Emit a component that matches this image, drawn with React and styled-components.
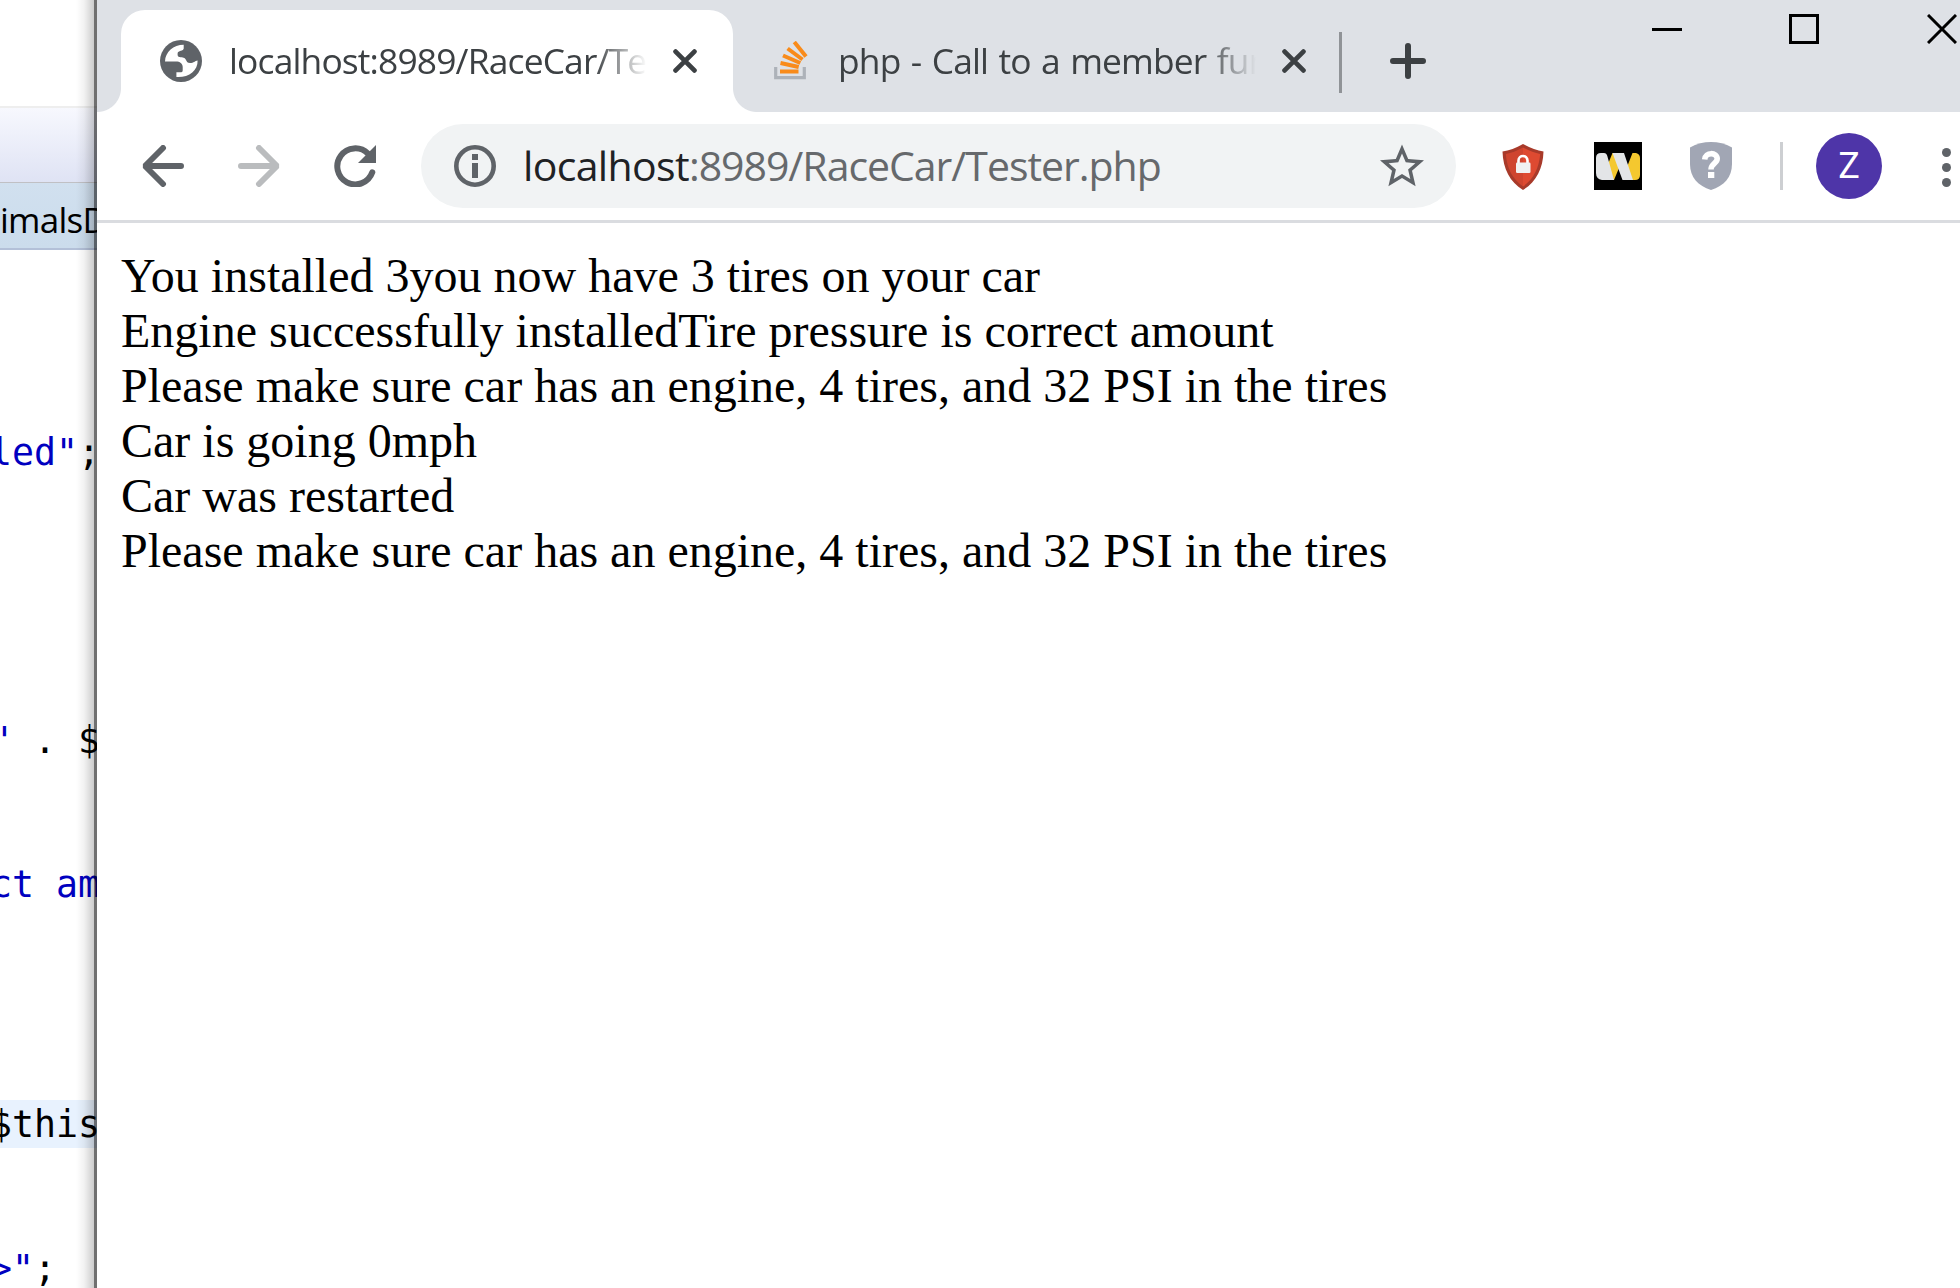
import React from "react";
import styled, { createGlobalStyle } from "styled-components";

const GlobalStyle = createGlobalStyle`
  html, body { margin: 0; padding: 0; background: #fff; }
  body { overflow: hidden; }
  * { box-sizing: border-box; }
  svg { display: block; flex: none; }
`;

const uiFont = `"Open Sans", "Noto Sans", sans-serif`;

const Desktop = styled.main`
  display: grid;
  grid-template-columns: 97px 1863px;
  width: 1960px;
  height: 1288px;
  overflow: hidden;
`;

/* ---------- editor behind the browser ---------- */

const Editor = styled.aside`
  position: relative;
  display: flex;
  flex-direction: column;
  overflow: hidden;
  padding-top: 106px;
  background: #fff;
  &::after {
    content: "";
    position: absolute;
    inset: 0;
    border-right: 3px solid rgba(0, 0, 0, 0.56);
    background: linear-gradient(to right, rgba(0, 0, 0, 0) 76px, rgba(0, 0, 0, 0.05) 84px, rgba(0, 0, 0, 0.2) 94px);
    background-clip: padding-box;
  }
`;

const EditorToolbar = styled.div`
  flex: none;
  height: 76px;
  border-top: 2px solid #eeeeee;
  background: linear-gradient(#f7f8fe, #dfe3f4);
`;

const EditorTab = styled.div`
  flex: none;
  height: 68px;
  border-top: 1px solid #c0c0c4;
  border-bottom: 2px solid #b3c0d8;
  background: linear-gradient(#d1e0ef, #cbdcec);
  font: 35px/74px ${uiFont};
  letter-spacing: -0.75px;
  white-space: nowrap;
  color: #000;
`;

const CodeArea = styled.div`
  flex: none;
  padding-top: 34px;
`;

const CodeLine = styled.div`
  height: 48px;
  text-indent: -10px;
  white-space: pre;
  font: 36.54px/50px "DejaVu Sans Mono", monospace;
  color: #000;
  background: ${(p) => (p.$current ? "#e8f2fe" : "transparent")};
`;

const StringLiteral = styled.span`
  color: #0000c0;
`;

/* ---------- browser window ---------- */

const Browser = styled.section`
  display: flex;
  flex-direction: column;
  background: #fff;
`;

const TabStrip = styled.div`
  display: flex;
  height: 112px;
  padding: 10px 0 0 24px;
  background: #dee1e6;
`;

const Tab = styled.div`
  position: relative;
  display: flex;
  align-items: center;
  flex: none;
  width: ${(p) => p.$width}px;
  height: 102px;
  padding-left: ${(p) => p.$pad}px;
  border-radius: 24px 24px 0 0;
  background: ${(p) => (p.$active ? "#fff" : "transparent")};
  &::before, &::after {
    content: "";
    display: ${(p) => (p.$active ? "block" : "none")};
    position: absolute;
    bottom: 0;
    width: 24px;
    height: 24px;
  }
  &::before {
    left: -24px;
    background: radial-gradient(circle at 0 0, transparent 23.5px, #fff 24.5px);
  }
  &::after {
    right: -24px;
    background: radial-gradient(circle at 100% 0, transparent 23.5px, #fff 24.5px);
  }
`;

const TabTitle = styled.div`
  flex: none;
  width: 418px;
  margin-left: ${(p) => p.$gap}px;
  margin-right: 26px;
  padding-bottom: 2px;
  overflow: hidden;
  white-space: nowrap;
  font: 35.4px/60px ${uiFont};
  letter-spacing: -0.85px;
  word-spacing: 2px;
  color: #3c4043;
  mask-image: linear-gradient(to right, #000 365px, transparent 418px);
`;

const TabDivider = styled.div`
  flex: none;
  width: 3px;
  height: 61px;
  margin: 22px 48px 0 33px;
  background: #909397;
`;

const NewTab = styled.div`
  padding-top: 33px;
`;

const WindowControls = styled.div`
  display: flex;
  gap: 107px;
  margin: 4px 0 0 226px;
  & > :last-child { margin-left: 1px; }
`;

const Toolbar = styled.div`
  display: flex;
  align-items: center;
  flex: none;
  height: 111px;
  padding: 0 0 0 45px;
  border-bottom: 3px solid #dadce0;
`;

const NavButtons = styled.div`
  display: flex;
  gap: 54px;
  margin-right: 45px;
`;

const AddressBar = styled.div`
  display: flex;
  align-items: center;
  flex: none;
  width: 1035px;
  height: 84px;
  padding: 0 32px 0 33px;
  border-radius: 42px;
  background: #f1f3f4;
`;

const Url = styled.div`
  flex: 1;
  margin-left: 27px;
  white-space: nowrap;
  font: 41px/82px ${uiFont};
  padding-bottom: 2px;
  letter-spacing: -1.02px;
  color: #66696c;
`;

const Host = styled.span`
  letter-spacing: -0.65px;
  color: #202124;
`;

const Extensions = styled.div`
  display: flex;
  align-items: center;
  gap: 48px;
  margin-left: 46px;
  & > :first-child { margin-right: 2px; }
`;

const ToolbarDivider = styled.div`
  width: 3px;
  height: 48px;
  background: #cdcfd2;
`;

const Avatar = styled.div`
  flex: none;
  width: 66px;
  height: 66px;
  margin: 0 60px 0 -15px;
  border-radius: 50%;
  background: #4e35a8;
  color: #fff;
  font: 36px/67px Roboto, sans-serif;
  text-align: center;
`;

const MenuDots = styled.div`
  display: grid;
  gap: 6px;
  margin: 3px 0 0 -48px;
  & > i {
    width: 9px;
    height: 9px;
    border-radius: 50%;
    background: #5f6368;
  }
`;

const Page = styled.article`
  padding: 25px 24px;
  font: 48px/55px "Liberation Serif", "Times New Roman", serif;
  color: #000;
  white-space: nowrap;
`;

/* ---------- drawings ---------- */

const Globe = () => (
  <svg width="42" height="42" viewBox="0 0 42 42">
    <circle cx="21" cy="21" r="21" fill="#5f6368" />
    <path fill="#fff" d="M5 21.5C5.2 12 13.5 4.7 23.7 4.7V8.6C23.7 11.3 17.8 10.4 17.6 13.4C17.4 16.6 18.5 17 21.8 17.3C27.5 17.8 25 23 30 23C34 23 34.7 20.6 37.6 20.4C38 30.6 28.5 37.8 16.4 37V32.2H21.2C22.6 32.2 22.7 31.5 22.7 29.5V27C22.7 23.5 19.8 21.5 16 21.5Z" />
  </svg>
);

const StackOverflow = () => (
  <svg width="34" height="40" viewBox="0 0 34 40">
    <path d="M1.700 26V36.700H30.300V26" fill="none" stroke="#adb2b9" strokeWidth="3.2" />
    <g stroke="#f98b1a" strokeWidth="4">
      <path d="M6 30.500H24.500" />
      <path d="M6.500 22L24.700 26" />
      <path d="M9 14.500L26.300 22" />
      <path d="M13.600 7.500L28.500 18.500" />
      <path d="M20.300 1L32 15.500" />
    </g>
  </svg>
);

const Cross = () => (
  <svg width="24" height="24" viewBox="0 0 24 24">
    <path d="M2.600 2.600L21.400 21.400M21.400 2.600L2.600 21.400" stroke="#3c4043" strokeWidth="4.800" strokeLinecap="round" />
  </svg>
);

const Plus = () => (
  <svg width="36" height="36" viewBox="0 0 36 36">
    <path d="M18 3V33M3 18H33" stroke="#3c4043" strokeWidth="6" strokeLinecap="round" />
  </svg>
);

const WindowIcon = ({ d }) => (
  <svg width="30" height="30" viewBox="0 0 30 30">
    <path d={d} fill="none" stroke="#000" strokeWidth="3" />
  </svg>
);

const Arrow = ({ forward }) => (
  <svg width="42" height="42" viewBox="0 0 42 42">
    <path
      d={forward ? "M3 21H37M21 3L39 21L21 39" : "M39 21H5M21 3L3 21L21 39"}
      fill="none"
      stroke={forward ? "#babcbe" : "#5f6368"}
      strokeWidth="6"
      strokeLinecap="round"
      strokeLinejoin="bevel"
    />
  </svg>
);

const Reload = () => (
  <svg width="42" height="42" viewBox="0 0 42 42">
    <path d="M34 8.600A18 18 0 1 0 38.300 27.300" fill="none" stroke="#5f6368" strokeWidth="6" strokeLinecap="round" />
    <path d="M42 0V18H24Z" fill="#5f6368" />
  </svg>
);

const Info = () => (
  <svg width="42" height="42" viewBox="0 0 42 42">
    <circle cx="21" cy="21" r="18.700" fill="none" stroke="#5f6368" strokeWidth="4.600" />
    <path d="M18 9H24V15H18ZM18 18H24V33H18Z" fill="#5f6368" />
  </svg>
);

const Star = () => (
  <svg width="44" height="44" viewBox="2 1.800 20 20">
    <path fill="#5f6368" d="M22 9.240l-7.190-.62L12 2 9.190 8.630 2 9.240l5.460 4.730L5.820 21 12 17.270 18.180 21l-1.630-7.030L22 9.240zM12 15.400l-3.760 2.270 1-4.280-3.320-2.880 4.380-.38L12 6.100l1.710 4.040 4.380.38-3.320 2.880 1 4.280L12 15.400z" />
  </svg>
);

const RedShield = () => (
  <svg width="42" height="48" viewBox="0 0 42 48">
    <path fill="#a83a2a" d="M21 2C14 6 7 8.500 0.500 9.500C1 27 8 40 21 48C34 40 41 27 41.500 9.500C35 8.500 28 6 21 2Z" />
    <path fill="#cf452f" d="M21 5.500C15 9 9 11 3.800 12C5 26.500 10.500 37 21 44.500Z" />
    <path fill="#de4a31" d="M21 5.500C27 9 33 11 38.200 12C37 26.500 31.500 37 21 44.500Z" />
    <path d="M16.500 22V18.500C16.500 12.500 25.500 12.500 25.500 18.500V22" fill="none" stroke="#fff" strokeWidth="2.600" />
    <rect x="14" y="20.500" width="14.500" height="10.500" rx="1.200" fill="#f1f1f1" />
  </svg>
);

const WBadge = () => (
  <svg width="48" height="48" viewBox="0 0 48 48">
    <rect width="48" height="48" fill="#000" />
    <path fill="#f4c82f" d="M18.500 11H23L25 26L20 38H18L14 22ZM38.500 11H42Q46 12 46 16V33Q46 38 41 38H38L33 25Z" />
    <path fill="#e3e5e7" d="M2 16Q2 11 7 11H10Q12.500 11 13.300 14L20 38H8Q2 37 2 31ZM18.500 11H30L39 38H28.500Z" />
  </svg>
);

const GreyShield = () => (
  <svg width="42" height="48" viewBox="0 0 42 48">
    <path fill="#a1a6b4" d="M0 5.500C13 -1.800 29 -1.800 42 5.500V22C42 35 34 44 21 48C8 44 0 35 0 22Z" />
    <path d="M14.700 17.500C15.200 9.700 27.200 10 27.200 16.800C27.200 21.500 21 21.500 21 27.500" fill="none" stroke="#fff" strokeWidth="5.600" />
    <rect x="18" y="30" width="6.300" height="6" fill="#fff" />
  </svg>
);

const codeLines = {
  3: [["led\"", true], [";"]],
  9: [["\"", true], [" . $"]],
  12: [["ct am", true]],
  17: [["$this"]],
  20: [[">\"", true], [";"]],
};

const output = [
  "You installed 3you now have 3 tires on your car",
  "Engine successfully installedTire pressure is correct amount",
  "Please make sure car has an engine, 4 tires, and 32 PSI in the tires",
  "Car is going 0mph",
  "Car was restarted",
  "Please make sure car has an engine, 4 tires, and 32 PSI in the tires",
];

export default function App() {
  return (
    <Desktop>
      <GlobalStyle />
      <Editor>
        <EditorToolbar />
        <EditorTab>imalsD</EditorTab>
        <CodeArea>
          {Array.from({ length: 21 }, (_, row) => (
            <CodeLine key={row} $current={row === 17}>
              {(codeLines[row] || []).map(([text, literal]) =>
                literal ? <StringLiteral key={text}>{text}</StringLiteral> : text
              )}
            </CodeLine>
          ))}
        </CodeArea>
      </Editor>
      <Browser>
        <TabStrip>
          <Tab $active $width={612} $pad={39}>
            <Globe />
            <TabTitle $gap={27}>localhost:8989/RaceCar/Tester.php</TabTitle>
            <Cross />
          </Tab>
          <Tab $width={573} $pad={41}>
            <StackOverflow />
            <TabTitle $gap={30}>php - Call to a member function</TabTitle>
            <Cross />
          </Tab>
          <TabDivider />
          <NewTab><Plus /></NewTab>
          <WindowControls>
            <WindowIcon d="M0 15.500H30" />
            <WindowIcon d="M1.500 1.500H28.500V28.500H1.500Z" />
            <WindowIcon d="M1 1L29 29M29 1L1 29" />
          </WindowControls>
        </TabStrip>
        <Toolbar>
          <NavButtons>
            <Arrow />
            <Arrow forward />
            <Reload />
          </NavButtons>
          <AddressBar>
            <Info />
            <Url><Host>localhost</Host>:8989/RaceCar/Tester.php</Url>
            <Star />
          </AddressBar>
          <Extensions>
            <RedShield />
            <WBadge />
            <GreyShield />
            <ToolbarDivider />
            <Avatar>Z</Avatar>
            <MenuDots><i /><i /><i /></MenuDots>
          </Extensions>
        </Toolbar>
        <Page>
          {output.map((line, i) => (
            <div key={i}>{line}</div>
          ))}
        </Page>
      </Browser>
    </Desktop>
  );
}
